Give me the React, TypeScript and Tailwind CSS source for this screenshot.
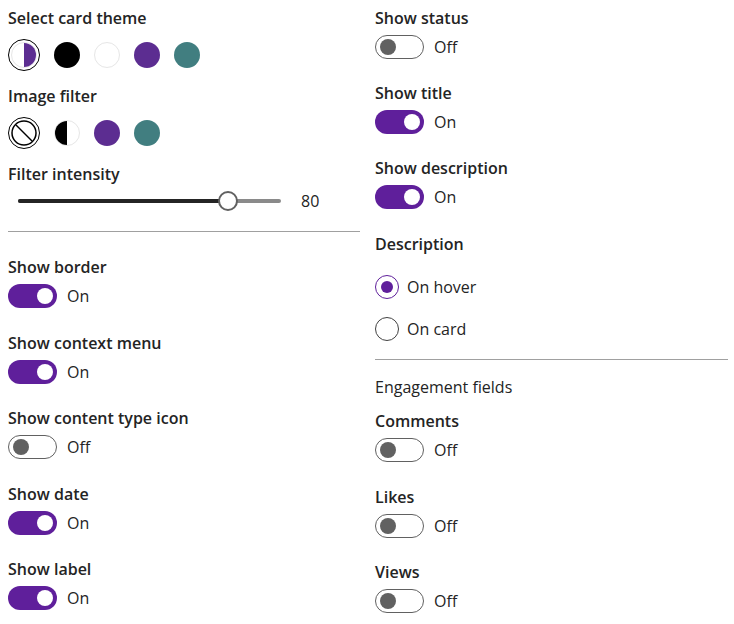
import { useState } from "react";

const PURPLE = "#5c2d91";

function Label({ children, className = "" }: { children: React.ReactNode; className?: string }) {
  return <div className={`text-[16px] leading-6 font-semibold text-[#242424] ${className}`}>{children}</div>;
}

function Toggle({ label, initial, className = "" }: { label: string; initial: boolean; className?: string }) {
  const [on, setOn] = useState(initial);
  return (
    <div className={className}>
      <Label>{label}</Label>
      <button className="mt-[5px] flex h-6 items-center gap-[10px]" onClick={() => setOn(!on)}>
        <span
          className={`flex h-6 w-[49px] items-center rounded-full px-[4px] ${
            on ? "justify-end bg-[#5f1f9b]" : "justify-start border border-[#616161] bg-white"
          }`}
        >
          <span className={`h-4 w-4 rounded-full ${on ? "bg-white" : "bg-[#616161]"}`} />
        </span>
        <span className="text-[16px] leading-6 text-[#242424]">{on ? "On" : "Off"}</span>
      </button>
    </div>
  );
}

function Swatch({ color, border }: { color: string; border?: boolean }) {
  return (
    <span
      className={`block h-[26px] w-[26px] rounded-full ${border ? "border border-[#e6e6e6]" : ""}`}
      style={{ backgroundColor: color }}
    />
  );
}

function Selected({ children }: { children: React.ReactNode }) {
  return (
    <span className="flex h-8 w-8 items-center justify-center rounded-full border-[1.5px] border-black">
      {children}
    </span>
  );
}

function Radio({ label, checked }: { label: string; checked: boolean }) {
  return (
    <div className="flex h-6 items-center gap-2">
      <span
        className={`flex h-6 w-6 items-center justify-center rounded-full border ${
          checked ? "border-[#5f1f9b]" : "border-[#424242]"
        }`}
      >
        {checked && <span className="h-3 w-3 rounded-full bg-[#5f1f9b]" />}
      </span>
      <span className="text-[16px] leading-6 text-[#242424]">{label}</span>
    </div>
  );
}

export default function App() {
  const [value] = useState(80);
  return (
    <div className="flex h-[624px] w-[734px] gap-[15px] bg-white pl-2 pr-[6px] pt-[6px]" style={{ fontFamily: '"Open Sans", "Noto Sans", sans-serif' }}>
      <div className="flex w-[352px] flex-col">
        <Label>Select card theme</Label>
        <div className="mt-[9px] flex h-8 items-center gap-[14px]">
          <Selected>
            <span className="relative block h-[26px] w-[26px] overflow-hidden rounded-full border border-[#e6e6e6]">
              <span className="absolute right-0 top-0 h-full w-1/2" style={{ backgroundColor: PURPLE }} />
            </span>
          </Selected>
          <Swatch color="#000000" />
          <Swatch color="#ffffff" border />
          <Swatch color={PURPLE} />
          <Swatch color="#417e80" />
        </div>

        <Label className="mt-[13px]">Image filter</Label>
        <div className="mt-[9px] flex h-8 items-center gap-[14px]">
          <Selected>
            <svg width="26" height="26" viewBox="0 0 26 26">
              <circle cx="13" cy="13" r="12" fill="none" stroke="#000" strokeWidth="1.5" />
              <line x1="5" y1="5" x2="21" y2="21" stroke="#000" strokeWidth="1.5" />
            </svg>
          </Selected>
          <span className="relative block h-[26px] w-[26px] overflow-hidden rounded-full border border-[#e6e6e6]">
            <span className="absolute left-0 top-0 h-full w-1/2 bg-black" />
          </span>
          <Swatch color={PURPLE} />
          <Swatch color="#417e80" />
        </div>

        <Label className="mt-[13px]">Filter intensity</Label>
        <div className="mt-[5px] flex h-5 items-center">
          <div className="relative ml-[10px] h-5 w-[263px]">
            <div className="absolute left-0 right-0 top-[8px] h-1 rounded-full bg-[#8a8a8a]" />
            <div className="absolute left-0 top-[8px] h-1 rounded-l-full bg-[#242424]" style={{ width: `${value * 2.62}px` }} />
            <div
              className="absolute top-0 h-5 w-5 rounded-full border-2 border-[#616161] bg-white"
              style={{ left: `${value * 2.62 - 10}px` }}
            />
          </div>
          <span className="ml-[20px] text-[16px] leading-6 text-[#242424]">{value}</span>
        </div>

        <div className="mt-[20px] h-px w-full bg-[#a0a0a0]" />

        <Toggle className="mt-[23px]" label="Show border" initial />
        <Toggle className="mt-[22.5px]" label="Show context menu" initial />
        <Toggle className="mt-[22.5px]" label="Show content type icon" initial={false} />
        <Toggle className="mt-[22.5px]" label="Show date" initial />
        <Toggle className="mt-[22.5px]" label="Show label" initial />
      </div>

      <div className="flex w-[353px] flex-col">
        <Toggle label="Show status" initial={false} />
        <Toggle className="mt-[22px]" label="Show title" initial />
        <Toggle className="mt-[22px]" label="Show description" initial />

        <Label className="mt-[23px]">Description</Label>
        <div className="mt-[19px] flex flex-col gap-[18px]">
          <Radio label="On hover" checked />
          <Radio label="On card" checked={false} />
        </div>

        <div className="mt-[18px] h-px w-full bg-[#a0a0a0]" />

        <div className="mt-[15px] text-[16px] leading-6 text-[#242424]">Engagement fields</div>
        <Toggle className="mt-[10px]" label="Comments" initial={false} />
        <Toggle className="mt-[22.5px]" label="Likes" initial={false} />
        <Toggle className="mt-[22.5px]" label="Views" initial={false} />
      </div>
    </div>
  );
}
